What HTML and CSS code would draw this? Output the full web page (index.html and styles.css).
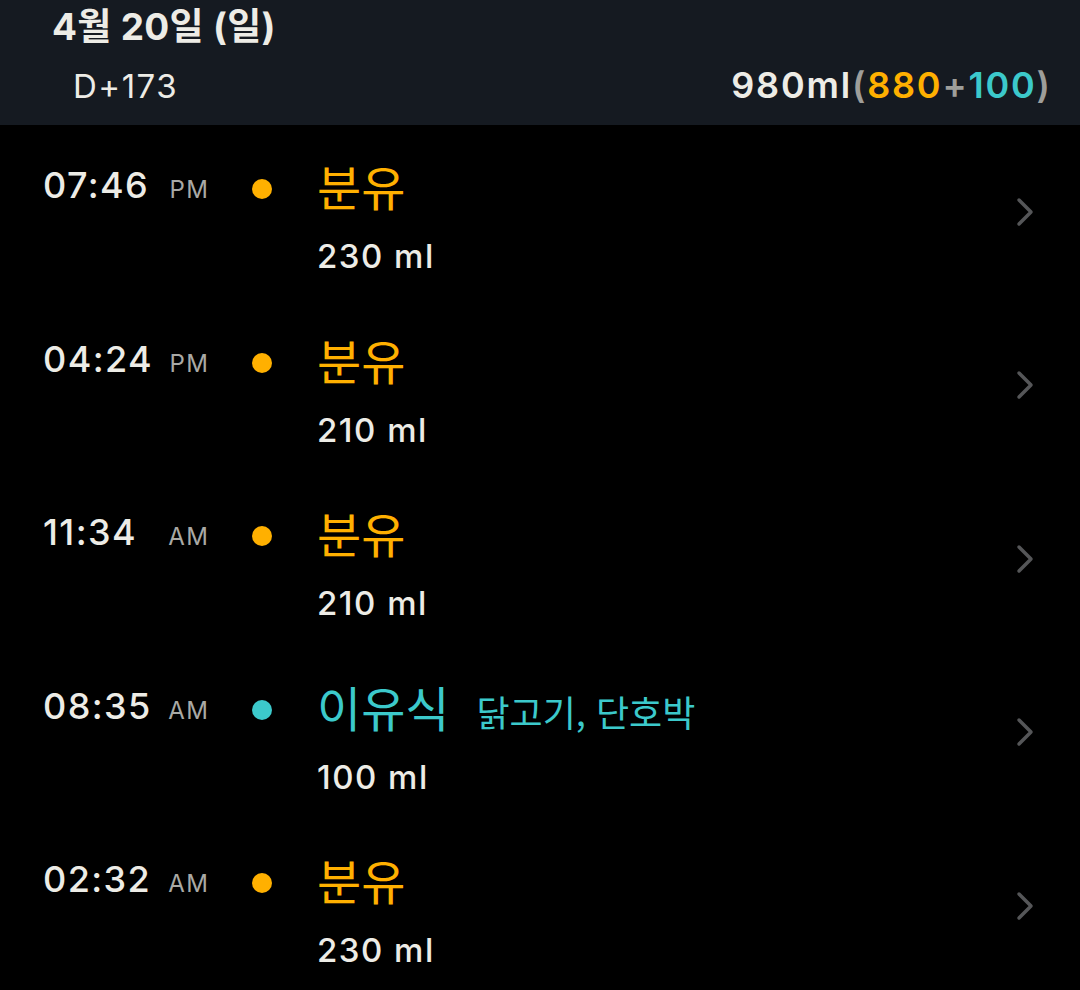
FILE: index.html
```html
<!DOCTYPE html>
<html lang="ko">
<head>
<meta charset="utf-8">
<link rel="stylesheet" href="styles.css">
</head>
<body>
<header class="header">
  <div class="date">4월 20일 (일)</div>
  <div class="sub">
    <span class="dday">D+173</span>
    <span class="total">980ml<span class="paren">(</span><span class="orange">880</span><span class="plus">+</span><span class="teal">100</span><span class="paren">)</span></span>
  </div>
</header>
<main class="list">
  <div class="row">
    <div class="main">
      <div class="line1">
        <div class="timecol"><span class="time">07:46</span><span class="ampm">PM</span></div>
        <span class="dot orange-bg"></span>
        <div class="title orange">분유</div>
      </div>
      <div class="amount">230 ml</div>
    </div>
    <svg class="chev" width="18" height="30" viewBox="0 0 18 30"><path d="M3 3 L15 15 L3 27" fill="none" stroke="#555658" stroke-width="3.5" stroke-linecap="round" stroke-linejoin="round"/></svg>
  </div>
  <div class="row">
    <div class="main">
      <div class="line1">
        <div class="timecol"><span class="time">04:24</span><span class="ampm">PM</span></div>
        <span class="dot orange-bg"></span>
        <div class="title orange">분유</div>
      </div>
      <div class="amount">210 ml</div>
    </div>
    <svg class="chev" width="18" height="30" viewBox="0 0 18 30"><path d="M3 3 L15 15 L3 27" fill="none" stroke="#555658" stroke-width="3.5" stroke-linecap="round" stroke-linejoin="round"/></svg>
  </div>
  <div class="row">
    <div class="main">
      <div class="line1">
        <div class="timecol"><span class="time">11:34</span><span class="ampm">AM</span></div>
        <span class="dot orange-bg"></span>
        <div class="title orange">분유</div>
      </div>
      <div class="amount">210 ml</div>
    </div>
    <svg class="chev" width="18" height="30" viewBox="0 0 18 30"><path d="M3 3 L15 15 L3 27" fill="none" stroke="#555658" stroke-width="3.5" stroke-linecap="round" stroke-linejoin="round"/></svg>
  </div>
  <div class="row">
    <div class="main">
      <div class="line1">
        <div class="timecol"><span class="time">08:35</span><span class="ampm">AM</span></div>
        <span class="dot teal-bg"></span>
        <div class="title teal">이유식<span class="detail">닭고기, 단호박</span></div>
      </div>
      <div class="amount">100 ml</div>
    </div>
    <svg class="chev" width="18" height="30" viewBox="0 0 18 30"><path d="M3 3 L15 15 L3 27" fill="none" stroke="#555658" stroke-width="3.5" stroke-linecap="round" stroke-linejoin="round"/></svg>
  </div>
  <div class="row">
    <div class="main">
      <div class="line1">
        <div class="timecol"><span class="time">02:32</span><span class="ampm">AM</span></div>
        <span class="dot orange-bg"></span>
        <div class="title orange">분유</div>
      </div>
      <div class="amount">230 ml</div>
    </div>
    <svg class="chev" width="18" height="30" viewBox="0 0 18 30"><path d="M3 3 L15 15 L3 27" fill="none" stroke="#555658" stroke-width="3.5" stroke-linecap="round" stroke-linejoin="round"/></svg>
  </div>
</main>
</body>
</html>
```
FILE: styles.css
```css
html, body {
  margin: 0;
  padding: 0;
  background: #000;
}
body {
  width: 1080px;
  height: 990px;
  overflow: hidden;
  font-family: Inter, "Noto Sans CJK KR", sans-serif;
  color: #edece6;
}
.header {
  background: #151a21;
  height: 125px;
  box-sizing: border-box;
  padding: 2px 30px 0 52px;
}
.date {
  font-size: 37px;
  font-weight: 700;
  line-height: 50px;
  letter-spacing: 0.3px;
}
.sub {
  display: flex;
  justify-content: space-between;
  align-items: baseline;
  padding-left: 21px;
  margin-top: 11px;
}
.dday {
  font-size: 33px;
  font-weight: 400;
  letter-spacing: 1.5px;
}
.total {
  font-size: 36px;
  font-weight: 600;
  letter-spacing: 1.8px;
  margin-right: -1.8px;
}
.paren, .plus { color: #9e9e9a; }
.orange { color: #ffb000; }
.teal { color: #3cc9cb; }
.orange-bg { background: #ffb000; }
.teal-bg { background: #3cc9cb; }
.list {
  display: flex;
  flex-direction: column;
}
.row {
  height: 173.5px;
  box-sizing: border-box;
  display: flex;
  padding: 0 46px 0 43px;
}
.main {
  flex: 1;
  display: flex;
  flex-direction: column;
  padding-top: 32px;
}
.line1 {
  display: flex;
  align-items: center;
  height: 56px;
}
.timecol {
  width: 165px;
  display: flex;
  justify-content: space-between;
  align-items: baseline;
}
.time {
  font-size: 36px;
  font-weight: 500;
  letter-spacing: 1.4px;
}
.ampm {
  font-size: 24px;
  font-weight: 400;
  letter-spacing: 1.5px;
  margin-right: -1.5px;
  color: #a9a9a5;
}
.dot {
  width: 20px;
  height: 20px;
  border-radius: 50%;
  margin-left: 44px;
  margin-top: 8px;
}
.title {
  margin-left: 45px;
  font-size: 48px;
  font-weight: 400;
  font-family: "Noto Sans CJK KR", sans-serif;
  display: flex;
  align-items: baseline;
}
.detail {
  font-size: 36px;
  font-weight: 400;
  margin-left: 27px;
}
.amount {
  margin-left: 274px;
  margin-top: 23px;
  font-size: 33px;
  font-weight: 500;
  line-height: 40px;
  letter-spacing: 1.5px;
}
.chev {
  flex: none;
  align-self: center;
}
```
